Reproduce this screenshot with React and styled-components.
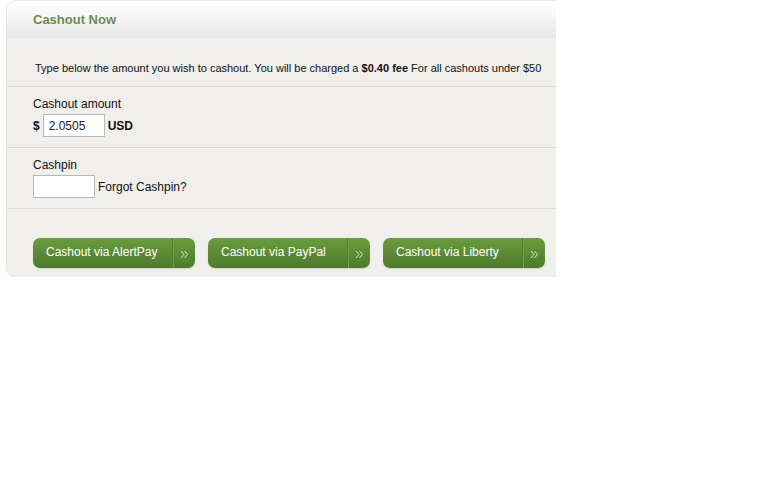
import React from "react";
import styled, { createGlobalStyle } from "styled-components";

const Global = createGlobalStyle`
  html, body { margin: 0; padding: 0; background: #ffffff; }
  body { font-family: "Liberation Sans", Arial, sans-serif; color: #111; }
`;

const Panel = styled.div`
  margin: 1px 0 0 7px;
  width: 549px;
  background: #f0efec;
  border-radius: 9px 0 0 9px;
  box-shadow: -1px 0 0 #e4e4e2, 0 1px 0 #e2e2e0, 0 -1px 0 #e8e8e8;
  overflow: hidden;
`;

const Header = styled.div`
  height: 37px;
  display: flex;
  align-items: center;
  padding-left: 26px;
  background: linear-gradient(to bottom, #fefefe 0%, #f6f6f6 45%, #e6e6e6 100%);
`;

const Title = styled.h1`
  margin: 0;
  font-size: 13px;
  font-weight: bold;
  color: #6b8f4b;
  padding-bottom: 1px;
`;

const Intro = styled.p`
  margin: 0;
  padding: 24px 0 11px 28px;
  font-size: 11px;
  line-height: 13px;
  color: #111111;
  border-bottom: 1px solid #dcdbd7;
  white-space: nowrap;
  b { font-weight: bold; color: #111111; }
`;

const Plain = styled.span`
  color: #111111;
`;

const Row = styled.div`
  padding: 10px 0 9px 26px;
  border-bottom: 1px solid #dcdbd7;
  display: flex;
  flex-direction: column;
  gap: 3px;
  font-size: 12px;
`;

const Label = styled.div`
  line-height: 14px;
`;

const Line = styled.div`
  display: flex;
  align-items: center;
  gap: 3px;
  height: 23px;
  margin-bottom: 1px;
`;

const Strong = styled.span`
  font-weight: bold;
`;

const Field = styled.input`
  box-sizing: border-box;
  width: 62px;
  height: 23px;
  border: 1px solid #b7b7b5;
  background: #fff;
  font-family: "Liberation Sans", Arial, sans-serif;
  font-size: 12px;
  padding: 0 5px;
  color: #222;
  margin: 0;
  outline: none;
`;

const Actions = styled.div`
  display: flex;
  gap: 13px;
  padding: 29px 0 9px 26px;
`;

const Button = styled.button`
  box-sizing: border-box;
  width: 162px;
  height: 30px;
  border: none;
  border-radius: 7px;
  background: linear-gradient(to bottom, #6b9b3f 0%, #5d8b35 50%, #4c7b2b 100%);
  color: #ffffff;
  font-family: "Liberation Sans", Arial, sans-serif;
  font-size: 12px;
  display: flex;
  align-items: stretch;
  padding: 0;
  cursor: pointer;
  box-shadow: 0 1px 1px rgba(0, 0, 0, 0.12);
`;

const ButtonText = styled.span`
  flex: 1;
  text-align: left;
  padding-left: 13px;
  line-height: 29px;
`;

const Arrow = styled.span`
  width: 22px;
  border-left: 1px solid #4f7d2d;
  box-shadow: inset 1px 0 0 #74a049;
  display: flex;
  align-items: center;
  justify-content: center;
  padding-top: 3px;
`;

const Chevrons = () => (
  <svg width="9" height="9" viewBox="0 0 9 9" fill="none" stroke="#dbe7cf" strokeWidth="1">
    <path d="M1 1 L4 4.5 L1 8" />
    <path d="M4.5 1 L7.5 4.5 L4.5 8" />
  </svg>
);

const methods = ["AlertPay", "PayPal", "Liberty"];

export default function App() {
  return (
    <>
      <Global />
      <Panel>
        <Header>
          <Title>Cashout Now</Title>
        </Header>
        <Intro>
          Type below the amount you wish to cashout. You will be charged a <b>$0.40 fee</b> For all cashouts under <Plain>$50</Plain>
        </Intro>
        <Row>
          <Label>Cashout amount</Label>
          <Line>
            <Strong>$</Strong>
            <Field defaultValue="2.0505" />
            <Strong>USD</Strong>
          </Line>
        </Row>
        <Row>
          <Label>Cashpin</Label>
          <Line>
            <Field defaultValue="" />
            <span>Forgot Cashpin?</span>
          </Line>
        </Row>
        <Actions>
          {methods.map((m) => (
            <Button key={m}>
              <ButtonText>Cashout via {m}</ButtonText>
              <Arrow>
                <Chevrons />
              </Arrow>
            </Button>
          ))}
        </Actions>
      </Panel>
    </>
  );
}
